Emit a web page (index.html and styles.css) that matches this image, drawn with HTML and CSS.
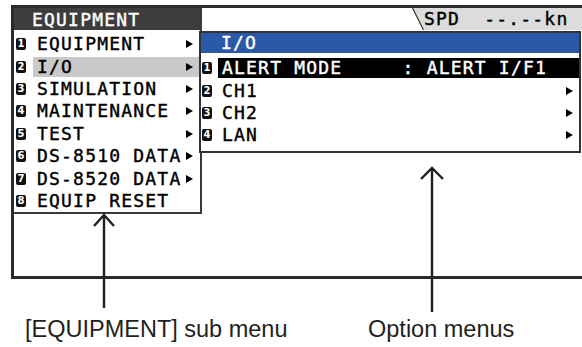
FILE: index.html
```html
<!DOCTYPE html>
<html lang="en">
<head>
    <meta charset="UTF-8">
    <meta name="viewport" content="width=device-width, initial-scale=1.0">
    <title>EQUIPMENT menu</title>

    <link rel="stylesheet" href="styles.css">
</head>
<body>

    <div class="screen">
        <div class="topRow">
            <!-- EQUIPMENT sub menu -->
            <div class="mainMenu">
                <div class="menuTitle">EQUIPMENT</div>
                <ul class="menuList">
                    <li class="menuItem"><span class="num">1</span><span class="label">EQUIPMENT<span class="arrow"></span></span></li>
                    <li class="menuItem"><span class="num">2</span><span class="label selected">I/O<span class="arrow"></span></span></li>
                    <li class="menuItem"><span class="num">3</span><span class="label">SIMULATION<span class="arrow"></span></span></li>
                    <li class="menuItem"><span class="num">4</span><span class="label">MAINTENANCE<span class="arrow"></span></span></li>
                    <li class="menuItem"><span class="num">5</span><span class="label">TEST<span class="arrow"></span></span></li>
                    <li class="menuItem"><span class="num">6</span><span class="label">DS-8510 DATA<span class="arrow"></span></span></li>
                    <li class="menuItem"><span class="num">7</span><span class="label">DS-8520 DATA<span class="arrow"></span></span></li>
                    <li class="menuItem"><span class="num">8</span><span class="label">EQUIP RESET</span></li>
                </ul>
            </div>

            <!-- status bar with speed tab -->
            <div class="statusBar">
                <svg class="slant" width="12" height="22" viewBox="0 0 12 22">
                    <polygon points="0,0 12,0 12,22 11,22" fill="#dcdcdc"/>
                    <line x1="0.5" y1="0" x2="11.5" y2="22" stroke="#333" stroke-width="1.2"/>
                </svg>
                <div class="spd">SPD  --.--kn</div>
            </div>
        </div>

        <!-- option menu popup -->
        <div class="optionMenu">
            <div class="optionTitle">I/O</div>
            <ul class="menuList">
                <li class="menuItem"><span class="num">1</span><span class="label active">ALERT MODE     : ALERT I/F1</span></li>
                <li class="menuItem"><span class="num">2</span><span class="label">CH1<span class="arrow"></span></span></li>
                <li class="menuItem"><span class="num">3</span><span class="label">CH2<span class="arrow"></span></span></li>
                <li class="menuItem"><span class="num">4</span><span class="label">LAN<span class="arrow"></span></span></li>
            </ul>
        </div>
    </div>

    <div class="captions">
        <span>[EQUIPMENT] sub menu</span>
        <span>Option menus</span>
    </div>

    <!-- callout arrows -->
    <svg class="callouts" width="582" height="347" viewBox="0 0 582 347">
        <g fill="none" stroke="#231f20" stroke-width="2.4">
            <line x1="104" y1="215" x2="104" y2="308"/>
            <polyline points="94,226 104,215 114,226"/>
            <line x1="432" y1="168" x2="432" y2="312"/>
            <polyline points="421,179 432,168 443,179"/>
        </g>
    </svg>

</body>
</html>
```

FILE: styles.css
```css
body {
    margin: 0;
    background: #ffffff;
    position: relative;
    width: 582px;
    height: 347px;
    overflow: hidden;
}

/* outer display frame */
.screen {
    position: relative;
    box-sizing: border-box;
    width: 571px;
    height: 274px;
    margin: 5px 0 0 11px;
    border: 3px solid #2b2b2b;
    border-right: none;
    font-family: "DejaVu Sans Mono", monospace;
    font-size: 18px;
    letter-spacing: 1.2px;
    color: #000;
    -webkit-text-stroke: 0.4px currentColor;
}

.topRow {
    display: flex;
    align-items: flex-start;
}

.mainMenu {
    width: 188px;
    flex-shrink: 0;
    border-right: 2px solid #3a3a3a;
    border-bottom: 2px solid #3a3a3a;
    box-sizing: border-box;
    background: #fff;
}

.menuTitle {
    height: 22px;
    line-height: 22px;
    padding: 1px 0 0 18px;
    box-sizing: border-box;
    background: #3d3d3d;
    color: #fff;
    margin-right: -2px;
}

.menuList {
    list-style: none;
    margin: 0;
    padding: 3px 0 0 0;
}

.menuItem {
    display: flex;
    align-items: center;
    height: 22.4px;
}

/* numbered black badge */
.num {
    width: 10px;
    height: 12px;
    margin-left: 2px;
    margin-right: 7px;
    border-radius: 2px;
    background: #111;
    color: #fff;
    font-family: "DejaVu Sans", sans-serif;
    font-weight: bold;
    font-size: 10px;
    line-height: 12px;
    letter-spacing: 0;
    -webkit-text-stroke: 0;
    text-align: center;
    flex-shrink: 0;
}

.label {
    flex: 1;
    display: flex;
    align-items: center;
    justify-content: space-between;
    height: 20px;
    line-height: 20px;
    padding: 0 7px 0 4px;
    white-space: pre;
}

.label.selected {
    background: #c9c9c9;
}

.label.active {
    background: #000;
    color: #fff;
}

.arrow {
    width: 0;
    height: 0;
    border-left: 7px solid #000;
    border-top: 4.5px solid transparent;
    border-bottom: 4.5px solid transparent;
    flex-shrink: 0;
}

.statusBar {
    flex: 1;
    height: 22px;
    display: flex;
    justify-content: flex-end;
}

.slant {
    display: block;
    margin-left: auto;
}

.spd {
    width: 158px;
    height: 22px;
    line-height: 22px;
    background: #dcdcdc;
    white-space: pre;
}

/* popup for the I/O option */
.optionMenu {
    position: absolute;
    left: 185px;
    top: 23px;
    width: 382px;
    box-sizing: border-box;
    border: 2px solid #333;
    background: #fff;
    padding-bottom: 4px;
}

.optionTitle {
    height: 20px;
    line-height: 20px;
    background: #2a5aa7;
    color: #fff;
    padding-left: 20px;
    margin-bottom: 4px;
}

.optionMenu .menuList {
    padding-top: 0;
}

.optionMenu .num {
    margin-left: 1px;
    margin-right: 6px;
}

.optionMenu .label {
    padding-right: 6px;
}

.captions {
    display: grid;
    grid-template-columns: 343px auto;
    padding-left: 25px;
    margin-top: 37px;
    font-family: "Liberation Sans", Arial, sans-serif;
    font-size: 23.5px;
    line-height: 27px;
    color: #231f20;
}

.callouts {
    position: absolute;
    left: 0;
    top: 0;
    pointer-events: none;
}
```
